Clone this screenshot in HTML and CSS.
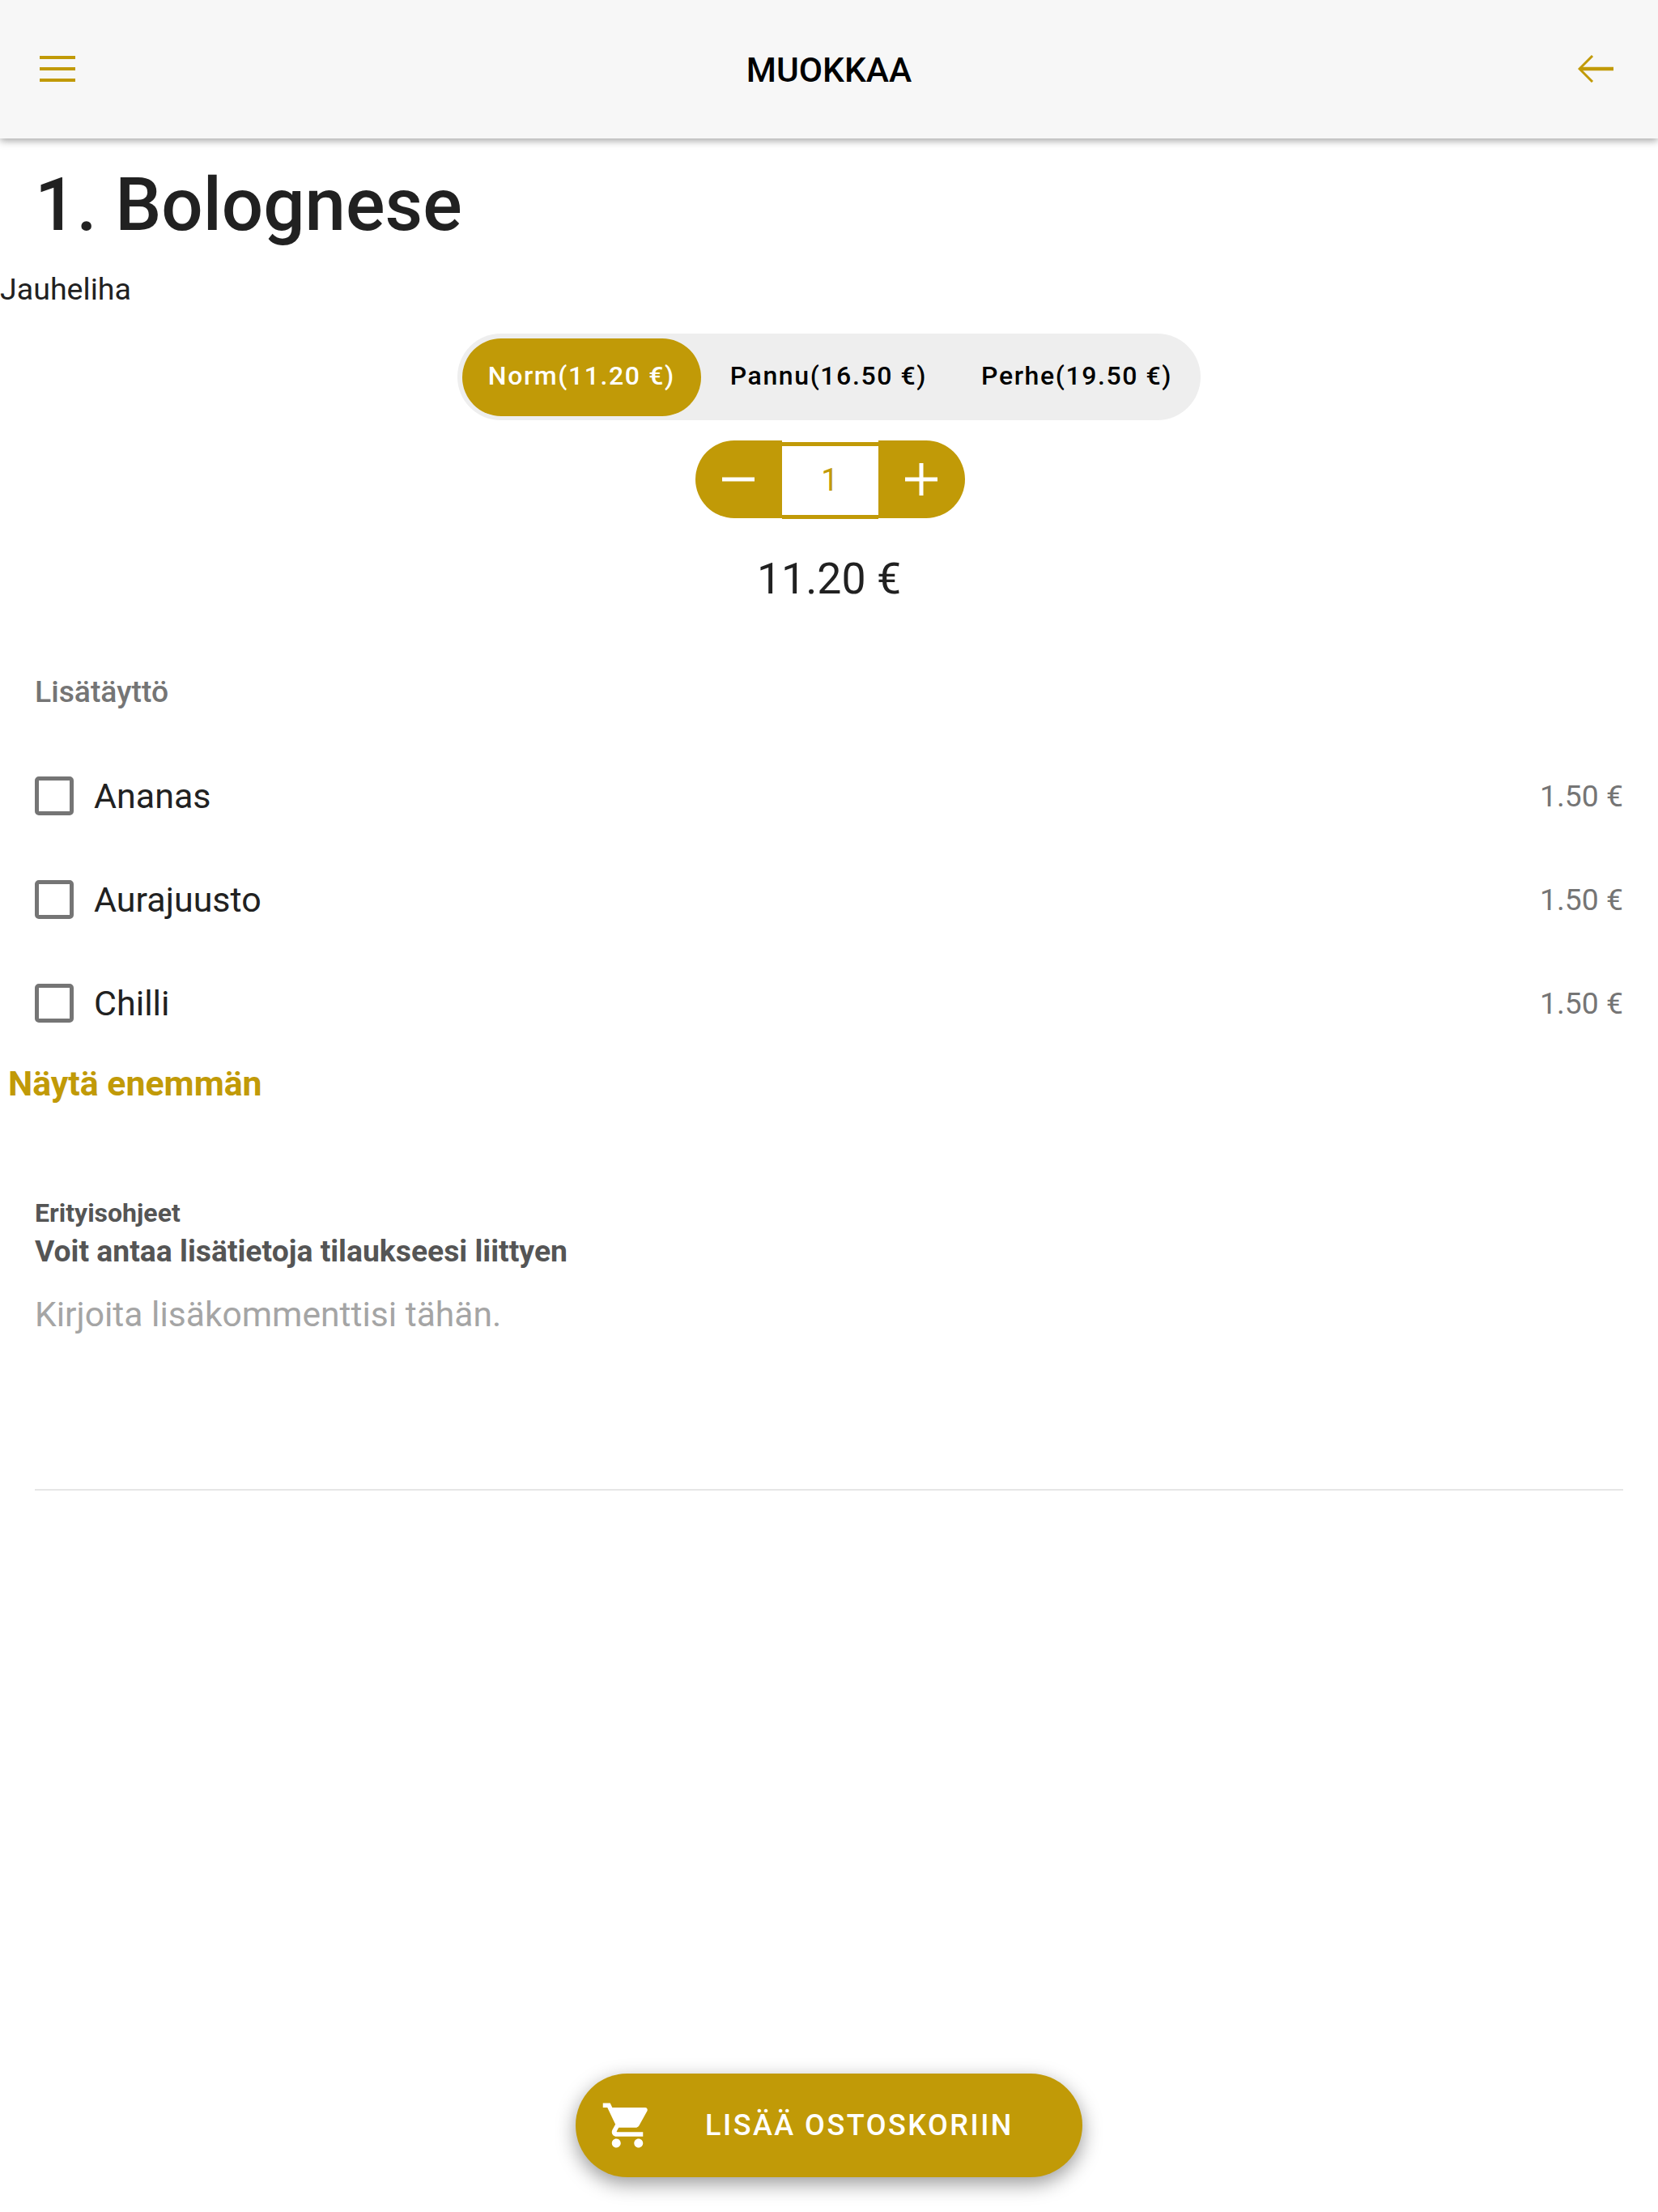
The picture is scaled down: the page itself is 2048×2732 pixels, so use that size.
FILE: index.html
```html
<!DOCTYPE html>
<html lang="fi">
<head>
    <meta charset="UTF-8">
    <meta name="viewport" content="width=device-width, initial-scale=1.0">
    <title>Muokkaa</title>
    <link rel="stylesheet" href="styles.css">
</head>
<body>
    <div class="page">
        <header class="topbar">
            <svg class="menu-icon" viewBox="0 0 44 34"><path d="M0 3h44M0 17h44M0 31h44"/></svg>
            <div class="topbar-title">MUOKKAA</div>
            <svg class="back-icon" viewBox="0 0 44 34"><path class="back-line" d="M3 17h41"/><path class="back-head" d="M18 1L2 17l16 16"/></svg>
        </header>
        <h1 class="dish-name">1. Bolognese</h1>
        <div class="dish-desc">Jauheliha</div>
        <div class="sizes">
            <div class="size active">Norm(11.20 €)</div>
            <div class="size">Pannu(16.50 €)</div>
            <div class="size">Perhe(19.50 €)</div>
        </div>
        <div class="stepper">
            <div class="step-btn minus"><svg viewBox="0 0 42 42"><path d="M1 21h40"/></svg></div>
            <div class="step-value">1</div>
            <div class="step-btn plus"><svg viewBox="0 0 42 42"><path d="M1 21h40M21 1v40"/></svg></div>
        </div>
        <div class="total">11.20 €</div>
        <div class="section-title">Lisätäyttö</div>
        <div class="extras">
            <div class="extra">
                <span class="check"></span>
                <span class="extra-name">Ananas</span>
                <span class="extra-price">1.50 €</span>
            </div>
            <div class="extra">
                <span class="check"></span>
                <span class="extra-name">Aurajuusto</span>
                <span class="extra-price">1.50 €</span>
            </div>
            <div class="extra">
                <span class="check"></span>
                <span class="extra-name">Chilli</span>
                <span class="extra-price">1.50 €</span>
            </div>
        </div>
        <div class="show-more">Näytä enemmän</div>
        <div class="notes">
            <div class="notes-label">Erityisohjeet</div>
            <div class="notes-help">Voit antaa lisätietoja tilaukseesi liittyen</div>
            <div class="notes-input">Kirjoita lisäkommenttisi tähän.</div>
        </div>
        <div class="cart-btn">
            <svg class="cart-icon" viewBox="0 0 24 24"><path d="M7 18c-1.1 0-1.99.9-1.99 2S5.9 22 7 22s2-.9 2-2-.9-2-2-2zM1 2v2h2l3.6 7.59-1.35 2.45c-.16.28-.25.61-.25.96 0 1.1.9 2 2 2h12v-2H7.42c-.14 0-.25-.11-.25-.25l.03-.12.9-1.63h7.45c.75 0 1.41-.41 1.75-1.03l3.58-6.47c.08-.14.12-.31.12-.48 0-.55-.45-1-1-1H5.21l-.94-2H1zm16 16c-1.1 0-1.99.9-1.99 2s.89 2 1.99 2 2-.9 2-2-.9-2-2-2z"/></svg>
            <span class="cart-text">LISÄÄ OSTOSKORIIN</span>
        </div>
    </div>
</body>
</html>
```

FILE: styles.css
```css
* {
    box-sizing: border-box;
}
body {
    margin: 0;
    background-color: #fff;
    font-family: Roboto, "Liberation Sans", sans-serif;
    color: #212121;
}
.page {
    display: flex;
    flex-direction: column;
    height: 2732px;
    overflow: hidden;
}
.topbar {
    display: flex;
    align-items: center;
    justify-content: space-between;
    flex: none;
    height: 171px;
    padding: 0 55px 0 49px;
    background-color: #f7f7f7;
    box-shadow: 0 3px 9px rgba(0, 0, 0, 0.35);
}
.menu-icon {
    width: 44px;
    height: 34px;
    margin-top: -2px;
    fill: none;
    stroke: #c19a07;
    stroke-width: 4;
}
.back-icon {
    width: 44px;
    height: 34px;
    margin-top: -2px;
    fill: none;
    stroke: #c19a07;
}
.back-line {
    stroke-width: 4.5;
}
.back-head {
    stroke-width: 3;
}
.topbar-title {
    margin: 3px 0 0 6px;
    font-size: 42.5px;
    font-weight: 500;
    line-height: 50px;
    color: #000;
}
.dish-name {
    margin: 32px 0 0 43px;
    font-size: 90.6px;
    font-weight: 500;
    line-height: 100px;
}
.dish-desc {
    margin-top: 29px;
    font-size: 37.6px;
    line-height: 50px;
}
.sizes {
    display: flex;
    align-self: center;
    align-items: center;
    height: 107px;
    margin-top: 30px;
    padding: 0 6px;
    background-color: #eee;
    border-radius: 54px;
}
.size {
    height: 96px;
    padding: 0 32px;
    border-radius: 48px;
    font-size: 32px;
    font-weight: 500;
    line-height: 93px;
    letter-spacing: 1.6px;
    color: #000;
}
.size:nth-child(2) {
    padding: 0 34px 0 36px;
}
.size:nth-child(3) {
    padding: 0 29px 0 33px;
}
.size.active {
    background-color: #c19a07;
    color: #fff;
}
.stepper {
    display: flex;
    align-self: center;
    align-items: flex-start;
    height: 97px;
    margin: 25px 0 0 2px;
}
.step-btn {
    display: flex;
    align-items: center;
    height: 96px;
    background-color: #c19a07;
}
.step-btn svg {
    width: 42px;
    height: 42px;
    fill: none;
    stroke: #fff;
    stroke-width: 5;
}
.minus {
    width: 107px;
    padding-left: 32px;
    border-radius: 48px 0 0 48px;
}
.plus {
    width: 107px;
    padding-left: 32px;
    border-radius: 0 48px 48px 0;
}
.step-value {
    width: 119px;
    height: 95px;
    margin-top: 2px;
    border-top: 5px solid #c19a07;
    border-bottom: 5px solid #c19a07;
    font-size: 38px;
    line-height: 85px;
    text-align: center;
    color: #c19a07;
}
.total {
    margin-top: 44px;
    font-size: 53.6px;
    line-height: 60px;
    text-align: center;
}
.section-title {
    margin: 89px 0 0 43px;
    font-size: 37.3px;
    font-weight: 500;
    line-height: 40px;
    color: #757575;
}
.extras {
    display: flex;
    flex-direction: column;
    margin: 45px 43px 0;
}
.extra {
    display: flex;
    align-items: center;
    height: 128px;
}
.check {
    width: 48px;
    height: 48px;
    border: 5px solid #757575;
    border-radius: 5px;
}
.extra-name {
    flex: 1;
    margin-left: 25px;
    font-size: 43px;
}
.extra-price {
    font-size: 37.3px;
    color: #757575;
}
.show-more {
    margin: 10px 0 0 10px;
    font-size: 42.8px;
    font-weight: 700;
    line-height: 50px;
    color: #c19a07;
}
.notes {
    height: 361px;
    margin: 117px 43px 0;
    border-bottom: 2px solid #e6e6e6;
}
.notes-label {
    font-size: 32px;
    font-weight: 700;
    line-height: 36px;
    color: #555;
}
.notes-help {
    margin-top: 9px;
    font-size: 37.3px;
    font-weight: 700;
    line-height: 40px;
    color: #555;
}
.notes-input {
    margin-top: 33px;
    font-size: 42.6px;
    line-height: 50px;
    color: #a5a5a5;
}
.cart-btn {
    display: flex;
    align-items: center;
    align-self: center;
    width: 626px;
    height: 128px;
    margin-top: auto;
    margin-bottom: 43px;
    padding-left: 31px;
    background-color: #c19a07;
    border-radius: 64px;
    box-shadow: 0 8px 24px rgba(0, 0, 0, 0.4);
}
.cart-icon {
    width: 66px;
    height: 66px;
    fill: #fff;
}
.cart-text {
    margin-left: 63px;
    font-size: 36px;
    font-weight: 500;
    letter-spacing: 2.5px;
    color: #fff;
}
```
